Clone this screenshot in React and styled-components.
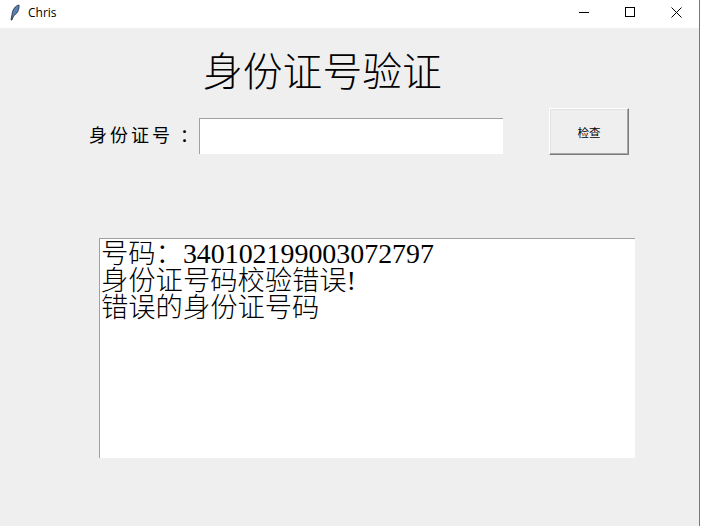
import React from "react";
import styled, { createGlobalStyle } from "styled-components";

const Global = createGlobalStyle`
  html, body { margin: 0; padding: 0; background: #fff; }
  #root { width: 701px; height: 526px; overflow: hidden; }
`;

const sans = `"Noto Sans CJK SC", "Noto Sans", sans-serif`;
const cjkSerifStack = `"Liberation Serif", "Noto Sans CJK SC", serif`;

const Window = styled.div`
  box-sizing: border-box;
  width: 700px;
  height: 526px;
  display: flex;
  flex-direction: column;
  background: #efefef;
  border-right: 1px solid #777;
`;
const TitleBar = styled.div`
  height: 28px;
  flex: none;
  display: flex;
  align-items: flex-start;
  background: #fff;
  padding-left: 9px;
`;
const AppIcon = styled.svg`
  margin-top: 4px;
`;
const AppName = styled.span`
  margin: 5px 0 0 8px;
  font: 12px/16px "Open Sans", "Noto Sans", sans-serif;
  color: #000;
`;
const Controls = styled.div`
  margin-left: auto;
  display: flex;
`;
const Control = styled.div`
  width: 46px;
  height: 24px;
  display: flex;
  align-items: center;
  justify-content: center;
`;
const Title = styled.h1`
  margin: 18px 0 0 203px;
  height: 48px;
  font: 300 39.8px/46px ${sans};
  color: #000;
  white-space: nowrap;
`;
const FormRow = styled.div`
  display: flex;
  align-items: flex-start;
  margin-top: 14px;
  padding-left: 89px;
`;
const Label = styled.label`
  width: 110px;
  height: 46px;
  font: 400 18px/52px ${sans};
  letter-spacing: 3px;
  color: #000;
  white-space: pre;
`;
const Input = styled.div`
  box-sizing: border-box;
  width: 304px;
  height: 36px;
  margin-top: 10px;
  background: #fff;
  border-top: 1px solid #a0a0a0;
  border-left: 1px solid #a0a0a0;
`;
const Button = styled.button`
  box-sizing: border-box;
  width: 80px;
  height: 47px;
  margin-left: 46px;
  padding: 0;
  background: #efefef;
  border: 1px solid;
  border-color: #fff #7c7c7c #7c7c7c #fff;
  box-shadow: inset -1px -1px 0 #a8a8a8, inset 1px 1px 0 #e3e3e3;
  font: 400 11.5px ${sans};
  color: #000;
`;
const Output = styled.div`
  box-sizing: border-box;
  width: 536px;
  height: 220px;
  margin: 83px 0 0 99px;
  padding: 1px 0 0 1px;
  background: #fff;
  border-top: 1px solid #a0a0a0;
  border-left: 1px solid #a0a0a0;
  font: 300 27.3px/27px ${cjkSerifStack};
  color: #000;
`;
const OutputLine = styled.div`
  white-space: nowrap;
`;
const Digits = styled.span`
  font-family: "Liberation Serif", serif;
  font-size: 27.9px;
`;

const Feather = () => (
  <AppIcon width="11" height="17" viewBox="0 0 11 17">
    <path d="M2 16 L3 10.5 C3.4 6 6 1.8 10 1 C10.4 4.5 9 9.5 4.8 11.5 L2.9 16 Z" fill="#5b7fb5" stroke="#1c2431" strokeWidth="0.8" />
  </AppIcon>
);

export default function App() {
  return (
    <Window>
      <Global />
      <TitleBar>
        <Feather />
        <AppName>Chris</AppName>
        <Controls>
          <Control>
            <svg width="11" height="11" viewBox="0 0 11 11"><path d="M0 5.5H10" stroke="#000" fill="none" /></svg>
          </Control>
          <Control>
            <svg width="11" height="11" viewBox="0 0 11 11"><rect x="0.5" y="0.5" width="9" height="9" stroke="#000" fill="none" /></svg>
          </Control>
          <Control>
            <svg width="11" height="11" viewBox="0 0 11 11"><path d="M0.5 0.5L10.5 10.5M10.5 0.5L0.5 10.5" stroke="#000" fill="none" /></svg>
          </Control>
        </Controls>
      </TitleBar>
      <Title>身份证号验证</Title>
      <FormRow>
        <Label>身份证号 ：</Label>
        <Input />
        <Button>检查</Button>
      </FormRow>
      <Output>
        <OutputLine>号码：<Digits>340102199003072797</Digits></OutputLine>
        <OutputLine>身份证号码校验错误!</OutputLine>
        <OutputLine>错误的身份证号码</OutputLine>
      </Output>
    </Window>
  );
}
